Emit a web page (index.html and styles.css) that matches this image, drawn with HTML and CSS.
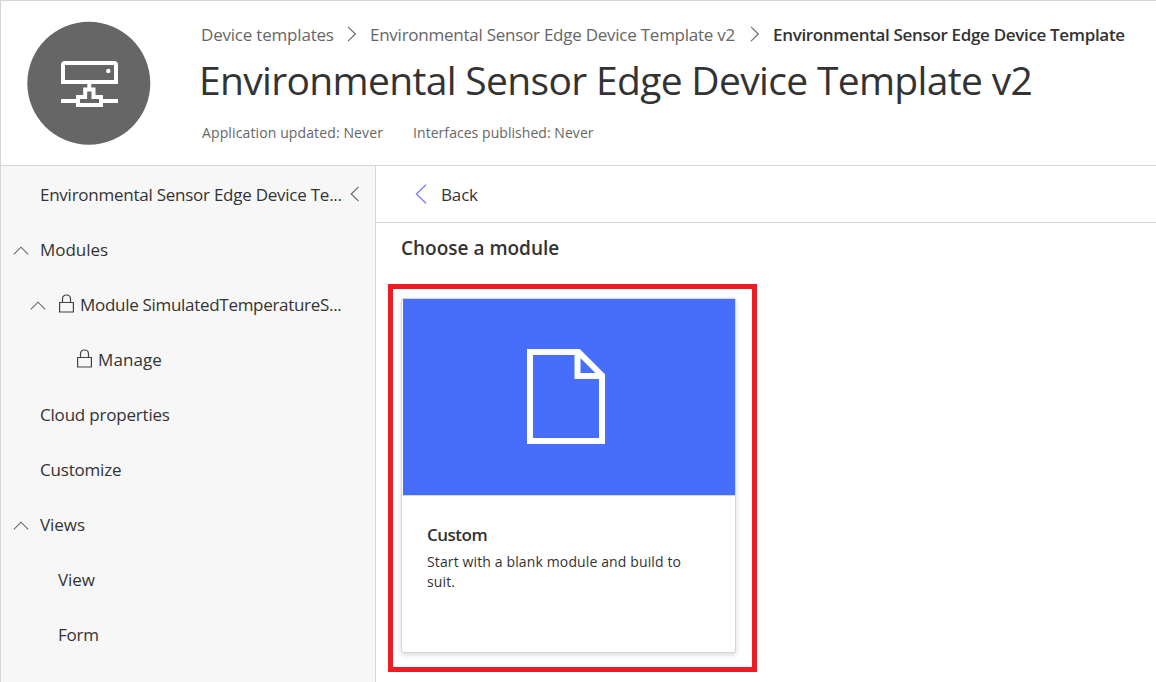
FILE: index.html
```html
<!DOCTYPE html>
<html lang="en">
<head>
<meta charset="utf-8">
<title>Environmental Sensor Edge Device Template v2</title>
<link rel="stylesheet" href="styles.css">
</head>
<body>
<div class="app">
  <header class="header">
    <svg class="avatar" width="124" height="124" viewBox="27 21 124 124">
      <circle cx="88.8" cy="83.300" r="61.500" fill="#666"/>
      <g fill="none" stroke="#fff" stroke-width="4">
        <path d="M63 82V65q0-2 2-2h49q2 0 2 2v17z"/>
        <path d="M89.300 84v4"/>
        <path d="M85.200 89.500h8.300v7.500h7.500v8H78v-8h7.200z"/>
        <path d="M61 101h16M102 101h16"/>
      </g>
      <path d="M87.600 95h3.400v4h-3.400z" fill="#666"/>
      <circle cx="108.300" cy="71" r="2.200" fill="#fff"/>
    </svg>
    <div class="heading">
      <nav class="crumbs">
        <a class="crumb root">Device templates</a>
        <svg class="sep" width="10" height="16" viewBox="0 0 10 16"><path d="M1 .8l7.400 7.200L1 15.200"/></svg>
        <a class="crumb parent">Environmental Sensor Edge Device Template v2</a>
        <svg class="sep" width="10" height="16" viewBox="0 0 10 16"><path d="M1 .8l7.400 7.200L1 15.200"/></svg>
        <a class="crumb current">Environmental Sensor Edge Device Template</a>
      </nav>
      <h1 class="title">Environmental Sensor Edge Device Template v2</h1>
      <div class="meta"><span class="updated">Application updated: Never</span><span class="published">Interfaces published: Never</span></div>
    </div>
  </header>
  <div class="body">
    <aside class="side">
      <div class="row root-row">
        <span class="name">Environmental Sensor Edge Device Te...</span>
        <svg class="collapse" width="10" height="16" viewBox="0 0 10 16"><path d="M8.600 .8L1.200 8l7.400 7.200"/></svg>
      </div>
      <div class="row group">
        <svg class="chev" width="16" height="9" viewBox="0 0 16 9"><path d="M.8 8.400L8 1.200l7.200 7.200"/></svg>
        <span class="plain">Modules</span>
      </div>
      <div class="row subgroup">
        <svg class="chev" width="16" height="9" viewBox="0 0 16 9"><path d="M.8 8.400L8 1.200l7.200 7.200"/></svg>
        <svg class="lock" width="15" height="19" viewBox="0 0 15 19"><path d="M.6 8.500h13.800v9.500H.6zM3.500 8.500V5q0-4 4-4t4 4v3.500"/></svg>
        <span class="module">Module SimulatedTemperatureS...</span>
      </div>
      <div class="row leaf">
        <svg class="lock" width="15" height="19" viewBox="0 0 15 19"><path d="M.6 8.500h13.800v9.500H.6zM3.500 8.500V5q0-4 4-4t4 4v3.500"/></svg>
        <span class="manage">Manage</span>
      </div>
      <div class="row top"><span>Cloud properties</span></div>
      <div class="row top"><span>Customize</span></div>
      <div class="row group">
        <svg class="chev" width="16" height="9" viewBox="0 0 16 9"><path d="M.8 8.400L8 1.200l7.200 7.200"/></svg>
        <span class="plain">Views</span>
      </div>
      <div class="row child"><span class="plain">View</span></div>
      <div class="row child"><span>Form</span></div>
    </aside>
    <main class="main">
      <div class="back">
        <svg class="back-icon" width="12" height="20" viewBox="0 0 12 20"><path d="M11 .8L1.400 10l9.600 9.200"/></svg>
        <span>Back</span>
      </div>
      <h2 class="choose">Choose a module</h2>
      <div class="highlight">
        <article class="card">
          <div class="card-art">
            <svg width="78" height="95" viewBox="0 0 78 95">
              <path d="M3 3h48.500L75 26.500V92H3zM50.500 3v24H75" fill="none" stroke="#fff" stroke-width="6"/>
            </svg>
          </div>
          <div class="card-text">
            <h3 class="card-title">Custom</h3>
            <p class="card-desc">Start with a blank module and build to suit.</p>
          </div>
        </article>
      </div>
    </main>
  </div>
</div>
</body>
</html>
```
FILE: styles.css
```css
* { box-sizing: border-box; }
body {
  margin: 0;
  background: #fff;
  color: #333;
  font-family: "Open Sans", "Noto Sans", sans-serif;
  font-size: 17px;
  line-height: 24px;
}
svg { display: block; flex: none; }
svg path { stroke-linejoin: miter; }
.app {
  display: flex;
  flex-direction: column;
  height: 682px;
  border-top: 1px solid #d6d6d6;
  border-left: 1px solid #d6d6d6;
  overflow: hidden;
}
.header {
  display: flex;
  flex: none;
  height: 165px;
  padding-left: 26px;
  border-bottom: 1px solid #d6d6d6;
}
.avatar { margin-top: 20px; }
.heading { padding: 22px 0 0 50px; white-space: nowrap; }
.crumbs { display: flex; align-items: center; height: 24px; color: #666; }
.root { width: 133px; letter-spacing: -0.2px; }
.parent { width: 366px; letter-spacing: -0.25px; }
.current { color: #333; font-weight: 600; letter-spacing: -0.33px; }
.sep { margin: -2px 13px 0 13px; }
.parent + .sep { margin-left: 14px; }
.sep path, .chev path, .collapse path { fill: none; stroke: #666; stroke-width: 1.1; }
.title {
  margin: 6px 0 0 -2px;
  font-size: 39px;
  font-weight: 400;
  line-height: 54px;
  letter-spacing: -0.67px;
}
.meta {
  display: flex;
  gap: 30px;
  margin: 15px 0 0 1px;
  font-size: 14px;
  line-height: 22px;
  color: #666;
}
.updated { letter-spacing: 0.12px; }
.published { letter-spacing: 0.05px; }
.body { display: flex; flex: 1; min-height: 0; }
.side {
  flex: none;
  width: 375px;
  padding-top: 1px;
  background: #f7f7f7;
  border-right: 1px solid #d6d6d6;
}
.row {
  display: flex;
  align-items: center;
  height: 55px;
  white-space: nowrap;
  letter-spacing: -0.2px;
}
.root-row { padding-left: 39px; }
.root-row .name { width: 310px; letter-spacing: -0.25px; }
.collapse { margin-top: -2px; }
.group { padding-left: 12px; }
.group .chev { margin: 1px 11px 0 0; }
.subgroup { padding-left: 29px; }
.subgroup .chev { margin: 1px 13px 0 0; }
.lock { margin: -3px 6px 0 0; }
.lock path { fill: none; stroke: #444; stroke-width: 1.2; }
.leaf { padding-left: 76px; }
.top { padding-left: 39px; }
.child { padding-left: 57px; }
.plain { letter-spacing: -0.05px; }
.module { letter-spacing: -0.3px; }
.manage { letter-spacing: 0.1px; }
.main { flex: 1; min-width: 0; }
.back {
  display: flex;
  align-items: center;
  gap: 14px;
  height: 57px;
  padding-left: 39px;
  border-bottom: 1px solid #d6d6d6;
}
.back span { padding-top: 2px; letter-spacing: -0.15px; }
.back-icon path { fill: none; stroke: #7d7bff; stroke-width: 1.3; }
.choose {
  margin: 12px 0 0 25px;
  font-size: 19px;
  font-weight: 600;
  line-height: 26px;
}
.highlight {
  width: 369px;
  height: 388px;
  margin: 23px 0 0 12px;
  padding: 9px 0 0 8px;
  border: 5px solid #ed1c24;
}
.card {
  width: 335px;
  height: 355px;
  border: 1px solid #d6d6d6;
  border-radius: 2px;
  box-shadow: 0 2px 5px rgba(0, 0, 0, 0.15);
}
.card-art {
  display: flex;
  align-items: flex-start;
  height: 197px;
  margin-left: 1px;
  padding: 50px 0 0 124px;
  border-bottom: 1px solid #d6d6d6;
  background: #466efa;
}
.card-text { padding: 27px 45px 0 25px; }
.card-title {
  margin: 0;
  font-size: 17px;
  font-weight: 600;
  line-height: 24px;
  letter-spacing: -0.5px;
}
.card-desc {
  margin: 5px 0 0;
  font-size: 14px;
  line-height: 20px;
  letter-spacing: 0.13px;
}
```
